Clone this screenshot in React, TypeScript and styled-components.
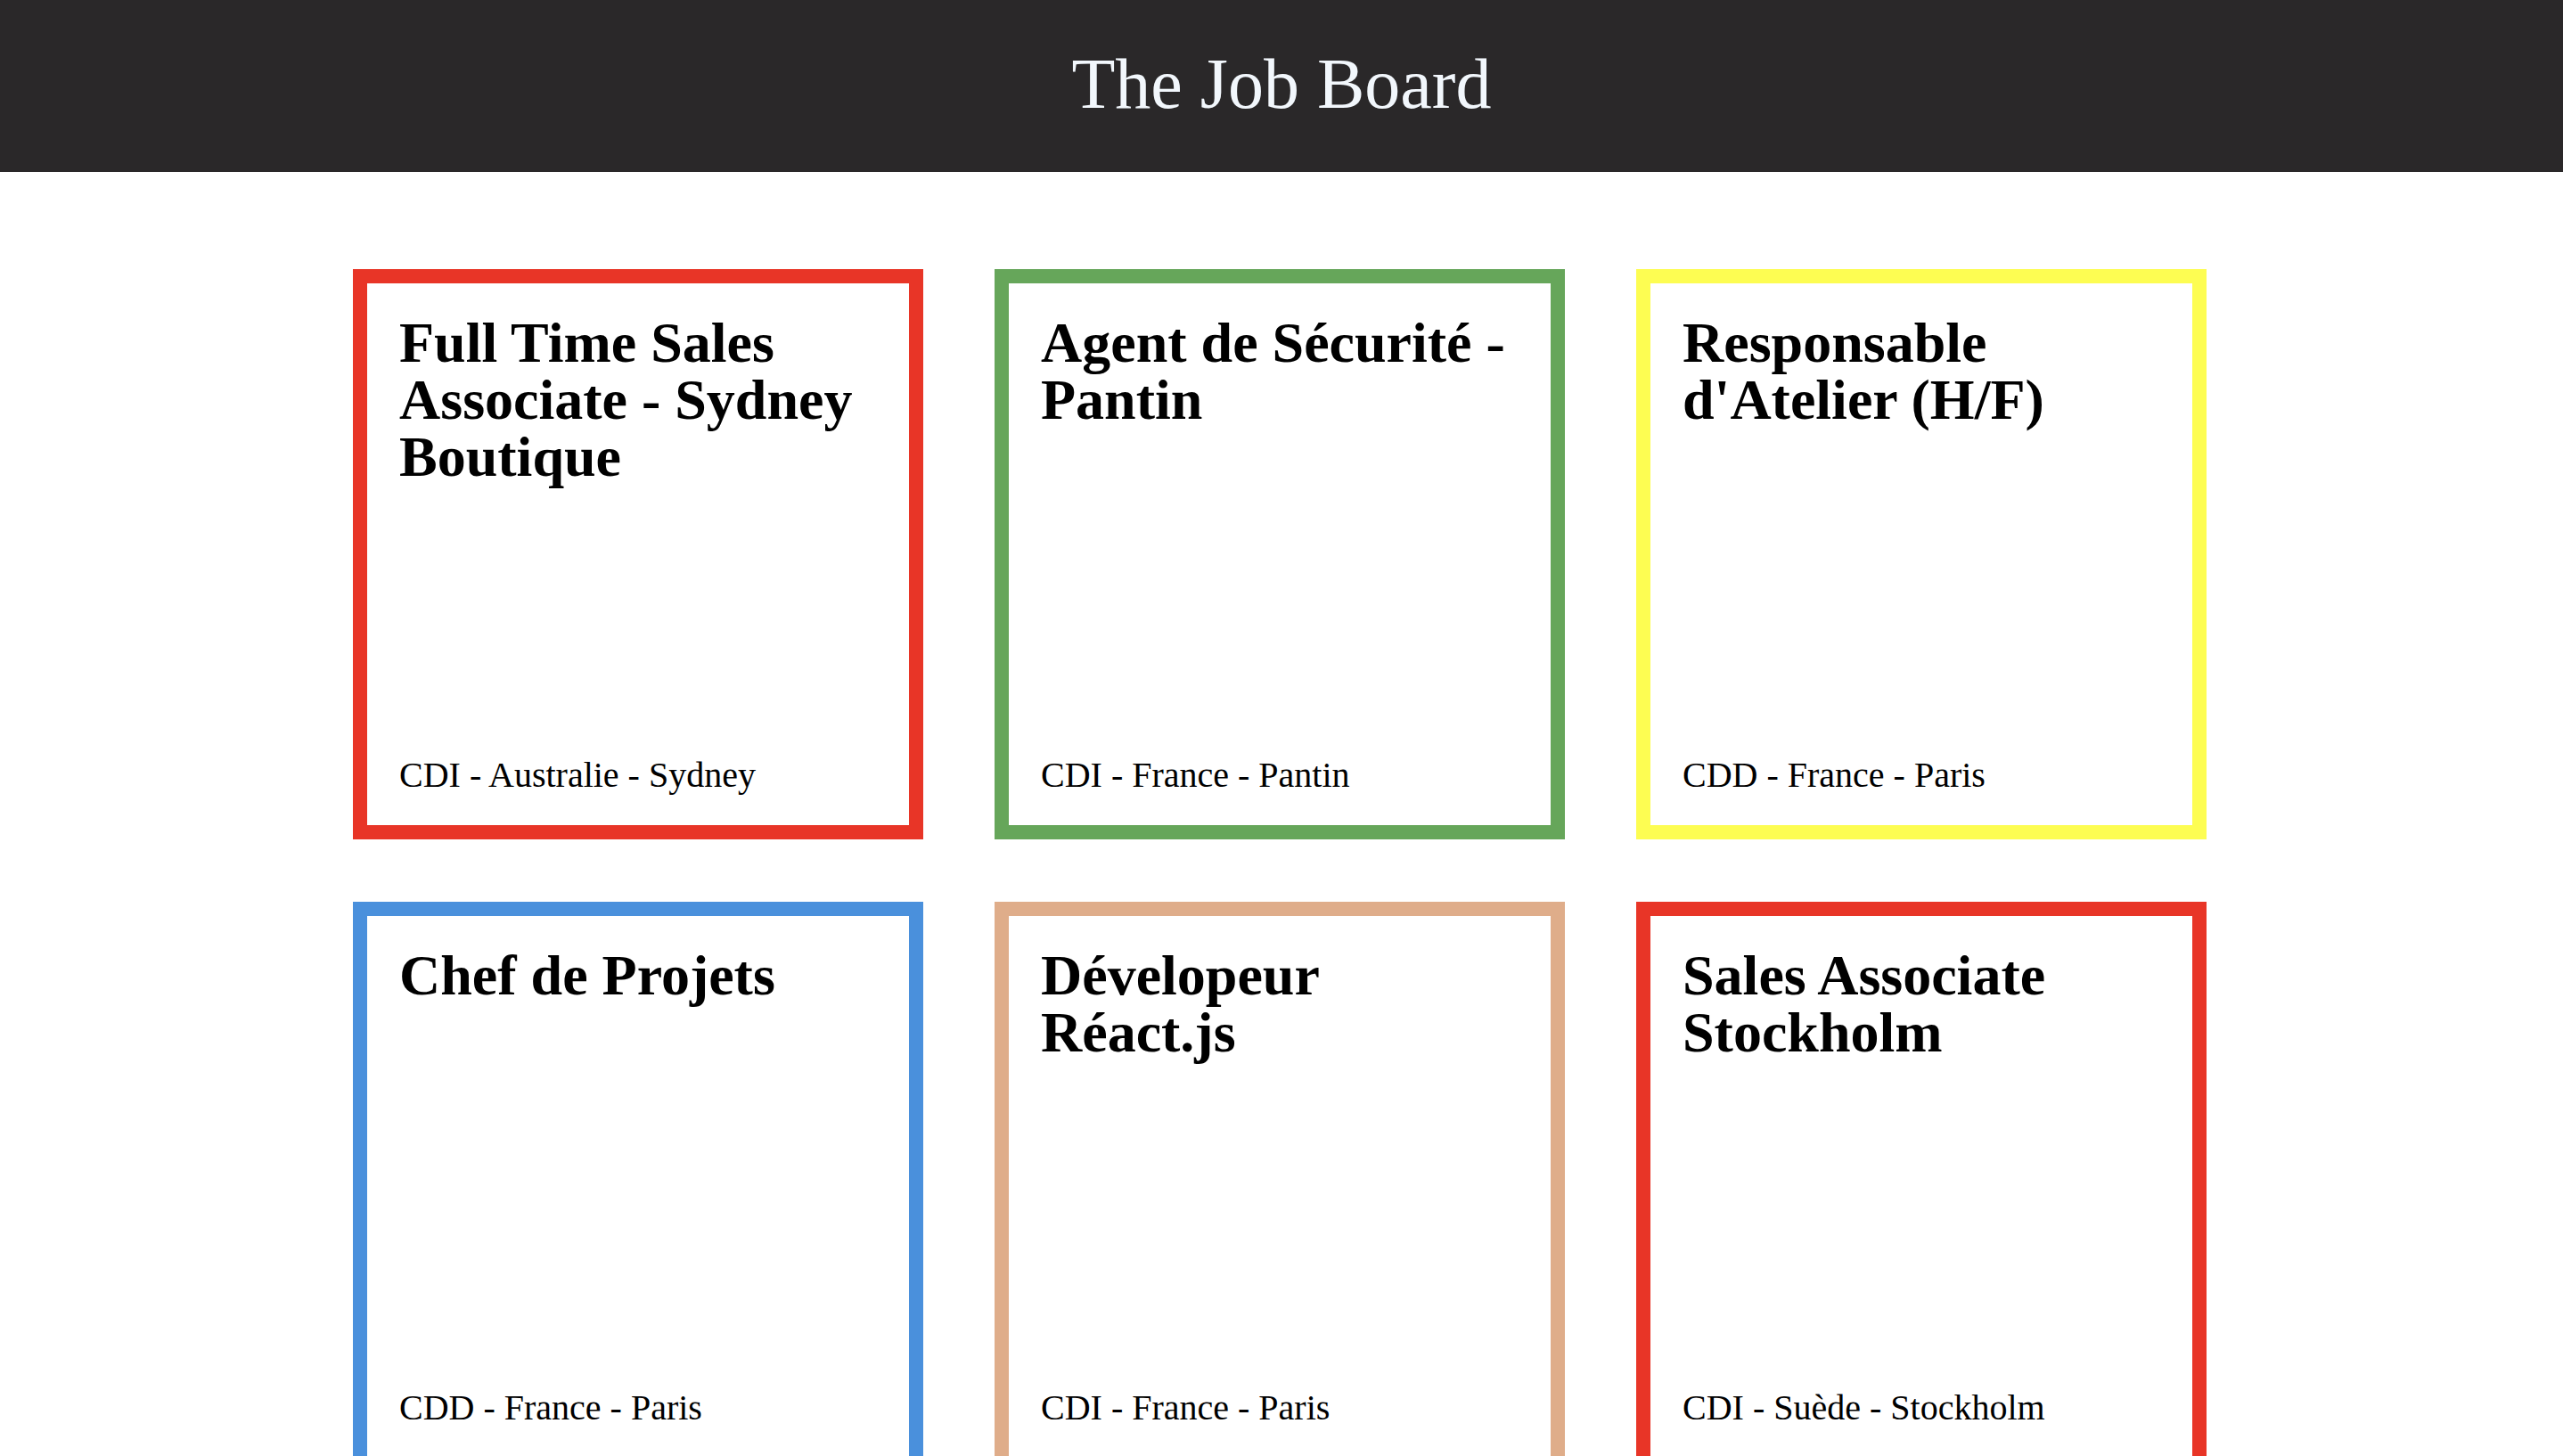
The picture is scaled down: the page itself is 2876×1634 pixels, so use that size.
import React from "react";
import styled, { createGlobalStyle } from "styled-components";

const GlobalStyle = createGlobalStyle`
  html, body {
    margin: 0;
    padding: 0;
    background: #ffffff;
    font-family: "Liberation Serif", "Times New Roman", serif;
  }
  * { box-sizing: border-box; }
`;

const Header = styled.header`
  height: 193px;
  background: #2a2829;
  padding-top: 48px;
  display: flex;
  justify-content: center;
`;

const Title = styled.h1`
  margin: 0;
  font-size: 80px;
  font-weight: 400;
  line-height: 92px;
  color: #f2f7fc;
`;

const Grid = styled.main`
  display: grid;
  grid-template-columns: repeat(3, 640px);
  column-gap: 80px;
  row-gap: 70px;
  justify-content: center;
  padding: 109px 4px 60px 0;
`;

const Card = styled.article<{ $color: string }>`
  width: 640px;
  height: 640px;
  border: 16px solid ${(p) => p.$color};
  padding: 35px 36px 33px;
  display: flex;
  flex-direction: column;
  justify-content: space-between;
  background: #ffffff;
`;

const JobTitle = styled.h2`
  margin: 0;
  font-size: 64px;
  line-height: 64px;
  font-weight: 700;
  color: #000;
`;

const Meta = styled.p`
  margin: 0;
  font-size: 40px;
  line-height: 46px;
  color: #000;
`;

const jobs = [
  { title: "Full Time Sales Associate - Sydney Boutique", meta: "CDI - Australie - Sydney", color: "#e83527" },
  { title: "Agent de Sécurité - Pantin", meta: "CDI - France - Pantin", color: "#66a65a" },
  { title: "Responsable d'Atelier (H/F)", meta: "CDD - France - Paris", color: "#fdfd52" },
  { title: "Chef de Projets", meta: "CDD - France - Paris", color: "#4a90dc" },
  { title: "Dévelopeur Réact.js", meta: "CDI - France - Paris", color: "#dfad8a" },
  { title: "Sales Associate Stockholm", meta: "CDI - Suède - Stockholm", color: "#e83527" },
];

export default function App() {
  return (
    <>
      <GlobalStyle />
      <Header>
        <Title>The Job Board</Title>
      </Header>
      <Grid>
        {jobs.map((j, i) => (
          <Card key={i} $color={j.color}>
            <JobTitle>{j.title}</JobTitle>
            <Meta>{j.meta}</Meta>
          </Card>
        ))}
      </Grid>
    </>
  );
}
